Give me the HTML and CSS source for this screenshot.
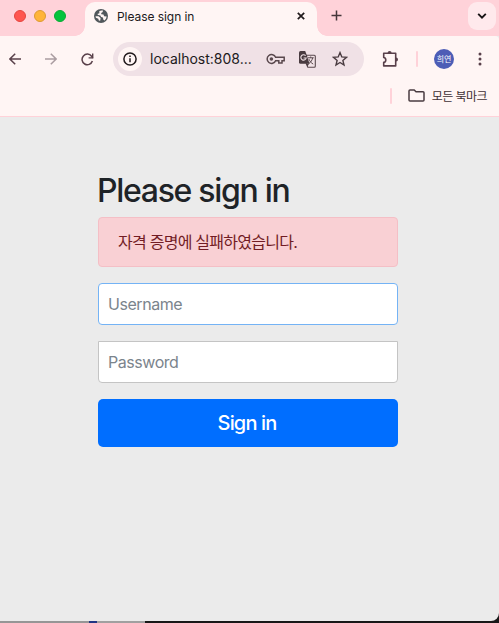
FILE: index.html
```html
<!DOCTYPE html>
<html lang="ko">
<head>
<meta charset="utf-8">
<title>Please sign in</title>
<link rel="stylesheet" href="styles.css">
</head>
<body>
<div class="window">
  <header class="tabstrip">
    <div class="lights"><i class="light red"></i><i class="light amber"></i><i class="light green"></i></div>
    <div class="tab">
      <svg class="globe" width="14" height="14" viewBox="0 0 14 14"><circle cx="7" cy="7" r="7" fill="#50575b"/><path d="M1.5 7.2 4.5 7.2 6.6 8.9 6.2 11.8 4.8 11.6 4.3 9.7 1.9 8.7ZM5.3 2.1 8.7 1.3 8.8 2.9 7.2 4 7.3 5.3 9.5 5.5 10.1 7.2 12.7 7.4 12.1 9.4 10.6 11.4 9.4 10.8 8.9 8.6 7.1 7.9 6.4 6.5 4.2 6.1 3.3 5 5.4 4.3Z" fill="#fff5f4"/></svg>
      <span class="tab-title">Please sign in</span>
      <svg class="close" width="8" height="8" viewBox="0 0 8 8"><path d="m.8.8 6.4 6.4m0-6.4L.8 7.2" stroke="#211a1c" stroke-width="1.7"/></svg>
    </div>
    <svg class="plus" width="11" height="11" viewBox="0 0 11 11"><path d="M5.5.5v10M.5 5.5h10" stroke="#44363a" stroke-width="1.5"/></svg>
    <div class="tab-menu"><svg width="10" height="6" viewBox="0 0 10 6"><path d="m1.2.9 3.8 3.7L8.8.9" fill="none" stroke="#171314" stroke-width="1.9"/></svg></div>
  </header>
  <nav class="toolbar">
    <svg class="back" width="12" height="12" viewBox="0 0 12 12"><path d="M6.2.7.9 6l5.3 5.3M1 6h11" fill="none" stroke="#59404a" stroke-width="1.5"/></svg>
    <svg class="forward" width="12" height="12" viewBox="0 0 12 12"><path d="M5.8.7 11.1 6l-5.3 5.3M11 6H0" fill="none" stroke="#aa9ca0" stroke-width="1.5"/></svg>
    <svg class="reload" width="13" height="13" viewBox="0 0 13 13"><path d="M11.4 8.1A5.3 5.3 0 1 1 10.6 3.2L11.7 5" fill="none" stroke="#59404a" stroke-width="1.5"/><path d="M12.4.6v5H7.6V4.2h3.4V.6Z" fill="#59404a"/></svg>
    <div class="address">
      <div class="info"><svg width="14" height="14" viewBox="0 0 14 14"><circle cx="7" cy="7" r="6.1" fill="none" stroke="#211a1c" stroke-width="1.5"/><path d="M7 6.2v4M7 3.6v1.5" stroke="#211a1c" stroke-width="1.5"/></svg></div>
      <span class="url">localhost:808...</span>
      <svg class="key" width="19" height="12" viewBox="0 0 19 12"><path d="M9.6 4.3A4.4 4.4 0 1 0 9.6 7.7H12.8V9.9H16V7.7H18.2V4.3Z" fill="none" stroke="#59484d" stroke-width="1.5"/><circle cx="5.4" cy="6" r="1.8" fill="#59484d"/></svg>
      <svg class="translate" width="17" height="17" viewBox="0 0 17 17"><path d="M7.3 4.2h8q1 0 1 1v10q0 1-1 1H8.8L7.3 12.8Z" fill="#f2e3e7" stroke="#59484d" stroke-width="1.1"/><path d="M9 6.8h5.7M11.7 5.5v1.3m2 0c-.6 3-2.5 5-4.2 6M9.9 8.1c1 2.3 2.3 3.8 4.3 5" fill="none" stroke="#59484d"/><path d="M1.5 0h4.7l1.6 4.2 2.7 8.6H1.5Q0 12.8 0 11.3v-9.8Q0 0 1.5 0Z" fill="#493b40"/><path d="M6.6 4.7A2.7 2.7 0 1 0 7.2 7H4.6" fill="none" stroke="#f2e3e7" stroke-width="1.1"/><path d="M7.5 12.8H10l-1.6 3Z" fill="#493b40"/></svg>
      <svg class="star" width="16" height="16" viewBox="0 0 16 16"><path d="m8 1.6 1.8 4.3 4.7.4-3.6 3.1 1.1 4.6L8 11.5 4 14l1.1-4.6-3.6-3.1 4.7-.4Z" fill="none" stroke="#493b40" stroke-width="1.4"/></svg>
    </div>
    <svg class="puzzle" width="17" height="17" viewBox="0 0 17 17"><path d="M1.7 2.3h12v12.6h-12v-3.6c2.8-.3 2.8-4.5 0-4.8Z" fill="none" stroke="#59404a" stroke-width="1.6" stroke-linejoin="round"/><path d="M5.6 2.1a2 2 0 0 1 4 0ZM14 6.6a2 2 0 0 1 0 4Z" fill="#59404a"/></svg>
    <i class="separator"></i>
    <div class="avatar">희연</div>
    <svg class="dots" width="4" height="14" viewBox="0 0 4 14"><g fill="#59404a"><circle cx="2" cy="2" r="1.5"/><circle cx="2" cy="7" r="1.5"/><circle cx="2" cy="12" r="1.5"/></g></svg>
  </nav>
  <div class="bookmarks">
    <i class="separator"></i>
    <svg class="folder" width="17" height="13" viewBox="0 0 17 13"><path d="M2 1h4.2L8 2.7h7q1 0 1 1V11q0 1-1 1H2q-1 0-1-1V2q0-1 1-1Z" fill="none" stroke="#493b40" stroke-width="1.5"/></svg>
    <span class="bookmarks-label">모든 북마크</span>
  </div>
  <main class="page">
    <form class="signin">
      <h2>Please sign in</h2>
      <div class="alert">자격 증명에 실패하였습니다.</div>
      <input class="field username" type="text" placeholder="Username" aria-label="Username">
      <input class="field password" type="password" placeholder="Password" aria-label="Password">
      <button type="button">Sign in</button>
    </form>
  </main>
</div>
</body>
</html>
```
FILE: styles.css
```css
* { box-sizing: border-box; }
html { height: 100%; background: linear-gradient(90deg, #969696 0 89px, #203584 89px 97px, #a0a0a0 97px 145px, #181818 145px); }
body { margin: 0; height: 623px; overflow: hidden; font-family: Inter, "Noto Sans CJK KR", sans-serif; }
svg { display: block; flex: none; }
.window { height: 621px; display: flex; flex-direction: column; overflow: hidden; border-radius: 0 0 8px 0; background: #ebebeb; }
.tabstrip { height: 36px; flex: none; display: flex; align-items: flex-start; background: #ffd2d9; }
.lights { display: flex; gap: 8px; padding: 10px 0 0 14px; width: 85px; }
.light { width: 12px; height: 12px; border-radius: 50%; border: 1px solid #e4453f; background: #ff554f; }
.amber { border-color: #dc9a31; background: #ffb438; }
.green { border-color: #08aa35; background: #04c43c; }
.tab { position: relative; width: 232px; height: 34px; margin-top: 2px; padding: 0 12px 6px 9px; display: flex; align-items: center; border-radius: 10px 10px 0 0; background: #fff5f4; }
.tab::before, .tab::after { content: ""; position: absolute; bottom: 0; width: 10px; height: 10px; }
.tab::before { left: -10px; background: radial-gradient(circle at 0 0, transparent 9.5px, #fff5f4 10px); }
.tab::after { right: -10px; background: radial-gradient(circle at 100% 0, transparent 9.5px, #fff5f4 10px); }
.tab-title { margin-left: 9px; font-size: 12px; letter-spacing: -.06px; color: #211a1c; }
.close { margin-left: auto; }
.plus { margin: 10px 0 0 14px; }
.tab-menu { width: 28px; height: 28px; margin: 2px 3px 0 auto; display: grid; place-items: center; border-radius: 9px; background: #ffe9ec; }
.toolbar { height: 46px; flex: none; display: flex; align-items: center; padding: 0 17px 0 9px; border-radius: 0 4px 0 0; background: #fff5f4; }
.forward { margin-left: 24px; }
.reload { margin-left: 24px; }
.address { width: 251px; height: 34px; margin-left: 19px; padding: 0 16px 0 5px; display: flex; align-items: center; border-radius: 17px; background: #f0e1e6; }
.info { width: 24px; height: 24px; display: grid; place-items: center; border-radius: 50%; background: #fff5f4; }
.url { width: 104px; margin-left: 8px; font-size: 14px; line-height: 18px; padding-bottom: 1px; white-space: nowrap; color: #211a1c; }
.key { margin-left: 12px; }
.translate { margin-left: 14px; }
.star { margin-left: auto; }
.puzzle { margin-left: 18px; }
.separator { width: 2px; height: 16px; border-radius: 1px; background: #ffd2d9; }
.toolbar .separator { margin-left: 17px; }
.avatar { width: 20px; height: 20px; margin-left: 16px; display: grid; place-items: center; border-radius: 50%; background: #4d5db6; color: #fff; font-size: 8px; line-height: 10px; white-space: nowrap; }
.dots { margin-left: auto; }
.bookmarks { height: 35px; flex: none; display: flex; align-items: center; justify-content: flex-end; padding: 0 12px 7px 0; border-bottom: 1px solid #ffd2d9; background: #fff5f4; color: #3e3034; font-size: 12px; }
.bookmarks-label { letter-spacing: -.55px; }
.folder { margin: 0 7px 0 16px; }
.page { flex: 1; padding: 54px 101px 0 98px; }
.signin { display: flex; flex-direction: column; }
h2 { margin: 0 0 7px -1px; font-size: 32px; line-height: 39px; font-weight: 500; letter-spacing: -1.3px; white-space: nowrap; color: #1e2327; }
.alert { height: 50px; margin-bottom: 16px; padding: 0 19px 2px; display: flex; align-items: center; border: 1px solid #f4bfc6; border-radius: 4px; background: #f9d0d4; color: #721c24; font-size: 16px; letter-spacing: -.75px; white-space: nowrap; }
.field { width: 100%; height: 42px; margin: 0 0 16px; padding: 0 9px 1px; border: 1px solid #74b3f5; border-radius: 4px; outline: 0; background: #fff; font: 16px Inter, sans-serif; letter-spacing: -.45px; }
.field::placeholder { color: #7b848c; opacity: 1; }
.password { border-color: #c4c4c4; border-radius: 0 0 4px 4px; }
button { height: 48px; padding: 0 2px 0 0; border: 0; border-radius: 5px; background: #006eff; color: #fff; font: 500 20px Inter, sans-serif; letter-spacing: -.85px; }
```
